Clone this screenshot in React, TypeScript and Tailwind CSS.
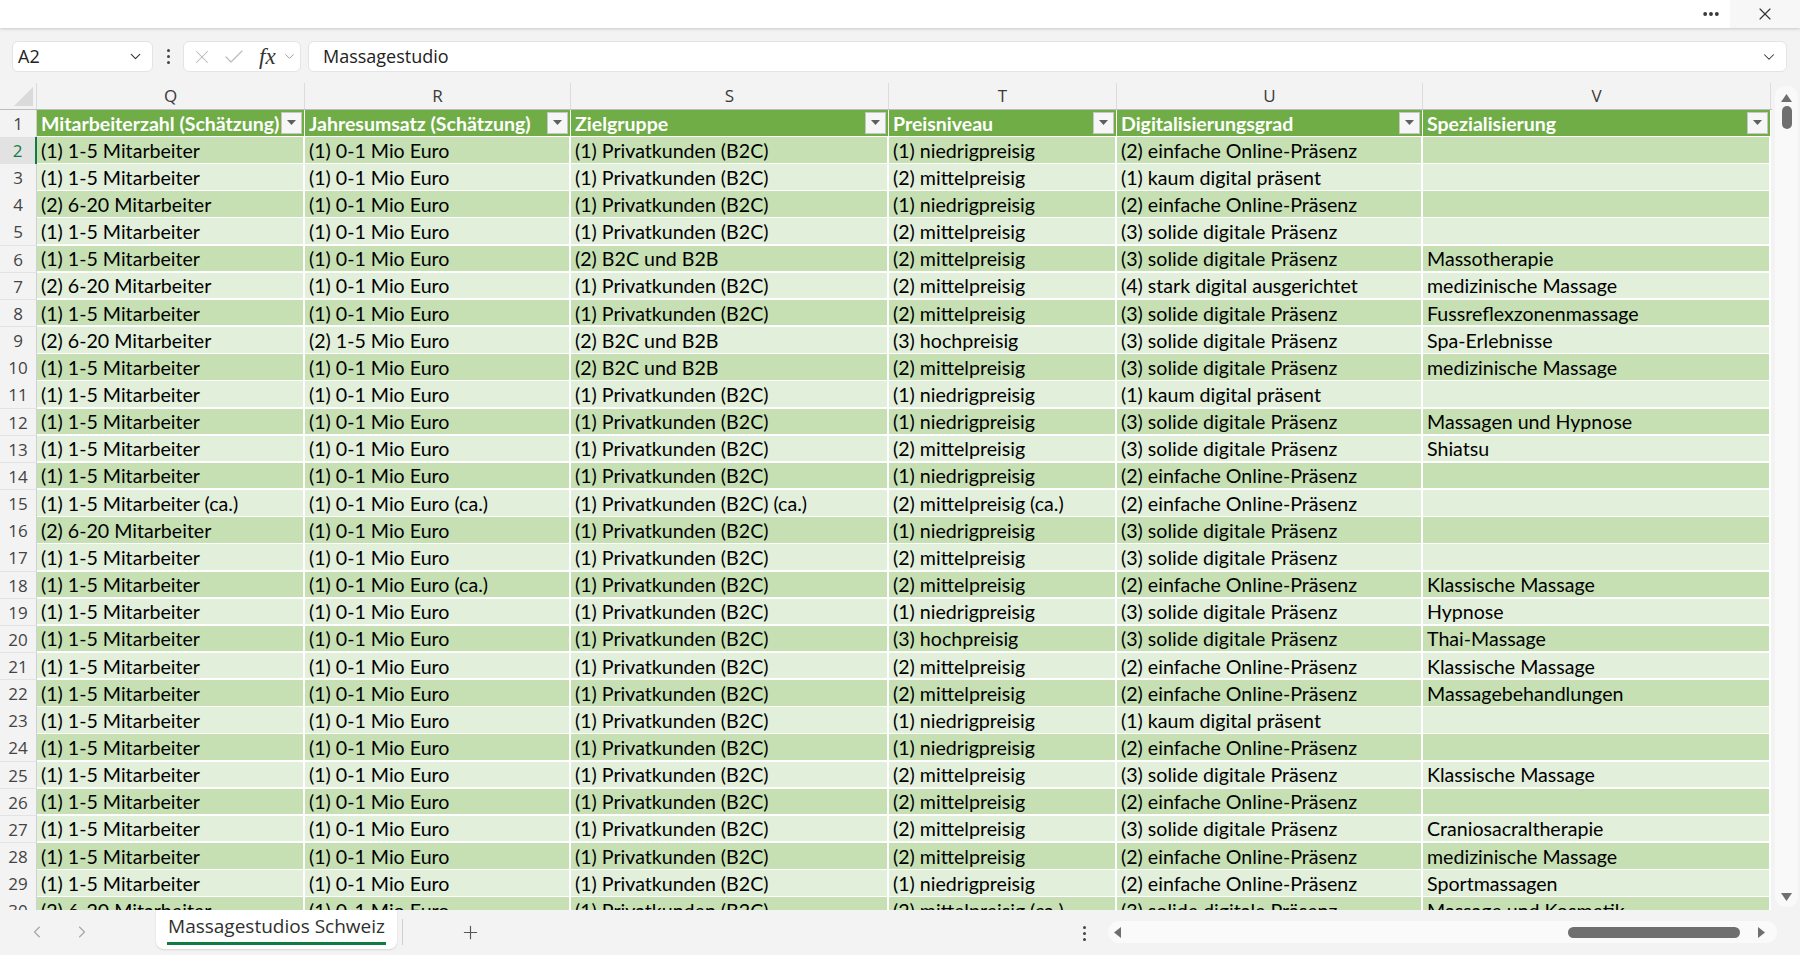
import React from "react";
import { ChevronDown, ChevronLeft, ChevronRight, Plus, X, Check, MoreHorizontal } from "lucide-react";

const Q1 = "(1) 1-5 Mitarbeiter";
const Q2 = "(2) 6-20 Mitarbeiter";
const R1 = "(1) 0-1 Mio Euro";
const R2 = "(2) 1-5 Mio Euro";
const S1 = "(1) Privatkunden (B2C)";
const S2 = "(2) B2C und B2B";
const T1 = "(1) niedrigpreisig";
const T2 = "(2) mittelpreisig";
const T3 = "(3) hochpreisig";
const U1 = "(1) kaum digital präsent";
const U2 = "(2) einfache Online-Präsenz";
const U3 = "(3) solide digitale Präsenz";
const U4 = "(4) stark digital ausgerichtet";

const rows: string[][] = [
  [Q1, R1, S1, T1, U2, ""],
  [Q1, R1, S1, T2, U1, ""],
  [Q2, R1, S1, T1, U2, ""],
  [Q1, R1, S1, T2, U3, ""],
  [Q1, R1, S2, T2, U3, "Massotherapie"],
  [Q2, R1, S1, T2, U4, "medizinische Massage"],
  [Q1, R1, S1, T2, U3, "Fussreflexzonenmassage"],
  [Q2, R2, S2, T3, U3, "Spa-Erlebnisse"],
  [Q1, R1, S2, T2, U3, "medizinische Massage"],
  [Q1, R1, S1, T1, U1, ""],
  [Q1, R1, S1, T1, U3, "Massagen und Hypnose"],
  [Q1, R1, S1, T2, U3, "Shiatsu"],
  [Q1, R1, S1, T1, U2, ""],
  ["(1) 1-5 Mitarbeiter (ca.)", "(1) 0-1 Mio Euro (ca.)", "(1) Privatkunden (B2C) (ca.)", "(2) mittelpreisig (ca.)", U2, ""],
  [Q2, R1, S1, T1, U3, ""],
  [Q1, R1, S1, T2, U3, ""],
  [Q1, "(1) 0-1 Mio Euro (ca.)", S1, T2, U2, "Klassische Massage"],
  [Q1, R1, S1, T1, U3, "Hypnose"],
  [Q1, R1, S1, T3, U3, "Thai-Massage"],
  [Q1, R1, S1, T2, U2, "Klassische Massage"],
  [Q1, R1, S1, T2, U2, "Massagebehandlungen"],
  [Q1, R1, S1, T1, U1, ""],
  [Q1, R1, S1, T1, U2, ""],
  [Q1, R1, S1, T2, U3, "Klassische Massage"],
  [Q1, R1, S1, T2, U2, ""],
  [Q1, R1, S1, T2, U3, "Craniosacraltherapie"],
  [Q1, R1, S1, T2, U2, "medizinische Massage"],
  [Q1, R1, S1, T1, U2, "Sportmassagen"],
  [Q2, R1, S1, "(2) mittelpreisig (ca.)", U3, "Massage und Kosmetik"],
];

const headers = [
  "Mitarbeiterzahl (Schätzung)",
  "Jahresumsatz (Schätzung)",
  "Zielgruppe",
  "Preisniveau",
  "Digitalisierungsgrad",
  "Spezialisierung",
];

const letters = ["Q", "R", "S", "T", "U", "V"];

const GRID = "grid grid-cols-[37px_268px_266px_318px_228px_306px_348px]";

function FilterButton() {
  return (
    <div className="w-[21px] h-[22px] shrink-0 mr-[2px] border border-[#c6c6c6] bg-[#f6f6f6] flex items-center justify-center">
      <svg width="9" height="5" viewBox="0 0 9 5">
        <polygon points="0,0 9,0 4.5,5" fill="#5f5f5f" />
      </svg>
    </div>
  );
}

function Tri({ dir }: { dir: "up" | "down" | "left" | "right" }) {
  if (dir === "up")
    return (
      <svg width="11" height="8" viewBox="0 0 11 8">
        <polygon points="5.5,0 11,8 0,8" fill="#6f6f6f" />
      </svg>
    );
  if (dir === "down")
    return (
      <svg width="11" height="8" viewBox="0 0 11 8">
        <polygon points="0,0 11,0 5.5,8" fill="#6f6f6f" />
      </svg>
    );
  if (dir === "left")
    return (
      <svg width="7" height="11" viewBox="0 0 7 11">
        <polygon points="7,0 7,11 0,5.5" fill="#6f6f6f" />
      </svg>
    );
  return (
    <svg width="7" height="11" viewBox="0 0 7 11">
      <polygon points="0,0 7,5.5 0,11" fill="#6f6f6f" />
    </svg>
  );
}

export default function App() {
  return (
    <div className="w-[1800px] h-[955px] bg-[#f3f3f3] flex flex-col overflow-hidden font-['Open_Sans',sans-serif] text-[#242424]">
      {/* Top bar */}
      <div className="h-[28px] shrink-0 bg-white flex items-stretch justify-end shadow-[0_1px_3px_rgba(0,0,0,0.18)] relative z-10">
        <div className="w-[38px] flex items-center justify-center text-[#333]">
          <MoreHorizontal size={20} strokeWidth={2.6} />
        </div>
        <div className="w-[70px] flex items-center justify-start pl-[25px] bg-[#f7f7f7] text-[#333]">
          <X size={20} strokeWidth={1.4} />
        </div>
      </div>

      {/* Formula bar */}
      <div className="h-[55px] shrink-0 flex items-start pt-[13px] pl-[12px] pr-[13px]">
        <div className="w-[141px] h-[31px] bg-white rounded-[6px] border border-[#e4e4e4] flex items-center pl-[5px] pr-[8px] justify-between">
          <span className="text-[18px] text-[#222]">A2</span>
          <ChevronDown size={17} strokeWidth={1.6} className="text-[#333]" />
        </div>
        <div className="w-[14px] ml-[8px] h-[31px] flex flex-col items-center justify-center gap-[3px]">
          <div className="w-[3px] h-[3px] rounded-full bg-[#444]" />
          <div className="w-[3px] h-[3px] rounded-full bg-[#444]" />
          <div className="w-[3px] h-[3px] rounded-full bg-[#444]" />
        </div>
        <div className="w-[118px] ml-[8px] h-[31px] bg-white rounded-[6px] border border-[#e4e4e4] flex items-center pl-[7px]">
          <X size={22} strokeWidth={1.1} className="text-[#b8b8b8]" />
          <Check size={24} strokeWidth={1.1} className="text-[#b8b8b8] ml-[9px]" />
          <span className="ml-[13px] font-['Liberation_Serif',serif] italic text-[23px] leading-none text-[#333]">fx</span>
          <ChevronDown size={15} strokeWidth={1.3} className="text-[#888] ml-[6px]" />
        </div>
        <div className="flex-1 ml-[7px] h-[31px] bg-white rounded-[6px] border border-[#e4e4e4] flex items-center pl-[14px] pr-[8px] justify-between">
          <span className="text-[18px] text-[#222]">Massagestudio</span>
          <ChevronDown size={18} strokeWidth={1.4} className="text-[#333]" />
        </div>
      </div>

      {/* Grid area */}
      <div className="flex-1 min-h-0 flex">
        <div className="w-[1772px] flex flex-col overflow-hidden">
          {/* Column letters */}
          <div className={`${GRID} h-[27px] shrink-0 border-b border-[#bdbdbd]`}>
            <div className="relative border-r border-[#dcdcdc]">
              <svg className="absolute right-[3px] bottom-[3px]" width="19" height="19" viewBox="0 0 19 19">
                <polygon points="19,0 19,19 0,19" fill="#dadada" />
              </svg>
            </div>
            {letters.map((l) => (
              <div key={l} className="flex items-center justify-center border-r border-[#dcdcdc] text-[17px] text-[#3a3a3a]">
                {l}
              </div>
            ))}
          </div>

          {/* Header row */}
          <div className={`${GRID} h-[27px] shrink-0`}>
            <div className="flex items-center justify-center bg-[#f3f3f3] border-r border-[#d0d0d0] border-b border-b-[#e3e3e3] text-[17px] text-[#444] pt-[1px]">
              1
            </div>
            {headers.map((h) => (
              <div
                key={h}
                className="flex items-center justify-between bg-[#70ad47] border-b-2 border-r border-white pl-[4px] font-['Lato',sans-serif] font-bold text-[19.5px] text-white whitespace-nowrap overflow-hidden"
              >
                <span className="pt-[1px]">{h}</span>
                <FilterButton />
              </div>
            ))}
          </div>

          {/* Data rows */}
          {rows.map((r, i) => {
            const n = i + 2;
            const dark = i % 2 === 0;
            const sel = n === 2;
            return (
              <div key={n} className={`${GRID} h-[27.17px] shrink-0`}>
                <div
                  className={`flex items-center justify-center border-b border-b-[#e3e3e3] text-[17px] pt-[1px] ${
                    sel
                      ? "bg-[#e2e2e2] text-[#107c41] border-r-2 border-r-[#107c41]"
                      : "bg-[#f3f3f3] text-[#444] border-r border-r-[#d0d0d0]"
                  }`}
                >
                  {n}
                </div>
                {r.map((c, j) => (
                  <div
                    key={j}
                    className={`flex items-center pl-[4px] pt-[1px] border-b-2 border-r-2 border-white font-['Lato',sans-serif] text-[19.6px] text-black whitespace-nowrap overflow-hidden ${
                      dark ? "bg-[#c6e0b4]" : "bg-[#e2efda]"
                    }`}
                  >
                    {c}
                  </div>
                ))}
              </div>
            );
          })}
        </div>

        {/* Vertical scrollbar */}
        <div className="flex-1 pt-[3px] pb-[3px] pl-[3px] pr-[2px]">
          <div className="h-full bg-[#f9f9f9] rounded-[10px] flex flex-col items-center pt-[8px] pb-[6px]">
            <Tri dir="up" />
            <div className="w-[10px] h-[23px] rounded-full bg-[#6f6f6f] mt-[4px]" />
            <div className="flex-1" />
            <Tri dir="down" />
          </div>
        </div>
      </div>

      {/* Bottom bar */}
      <div className="h-[45px] shrink-0 flex items-start">
        <div className="ml-[25px] mt-[10px] w-[24px] h-[24px] flex items-center justify-center text-[#a8a8a8]">
          <ChevronLeft size={20} strokeWidth={1.4} />
        </div>
        <div className="ml-[21px] mt-[10px] w-[24px] h-[24px] flex items-center justify-center text-[#a8a8a8]">
          <ChevronRight size={20} strokeWidth={1.4} />
        </div>
        <div className="ml-[62px] w-[241px] h-[39px] bg-white rounded-b-[8px] shadow-[0_1px_2px_rgba(0,0,0,0.12)] flex flex-col items-center justify-center">
          <span className="text-[19px] text-[#303030] leading-[24px]">Massagestudios Schweiz</span>
          <div className="w-[219px] h-[3px] bg-[#107c41] mt-[4px]" />
        </div>
        <div className="ml-[5px] mt-[9px] w-px h-[26px] bg-[#cfcfcf]" />
        <div className="ml-[55px] mt-[10px] w-[24px] h-[24px] flex items-center justify-center text-[#555]">
          <Plus size={21} strokeWidth={1.3} />
        </div>
        <div className="flex-1" />
        <div className="mt-[11px] w-[24px] h-[24px] flex flex-col items-center justify-center gap-[3px]">
          <div className="w-[3px] h-[3px] rounded-full bg-[#444]" />
          <div className="w-[3px] h-[3px] rounded-full bg-[#444]" />
          <div className="w-[3px] h-[3px] rounded-full bg-[#444]" />
        </div>
        <div className="ml-[12px] mr-[23px] mt-[11px] w-[669px] h-[22px] bg-[#fafafa] rounded-full flex items-center pl-[6px]">
          <Tri dir="left" />
          <div className="ml-[447px] w-[172px] h-[11px] rounded-full bg-[#6f6f6f]" />
          <div className="ml-[18px]">
            <Tri dir="right" />
          </div>
        </div>
      </div>
    </div>
  );
}
